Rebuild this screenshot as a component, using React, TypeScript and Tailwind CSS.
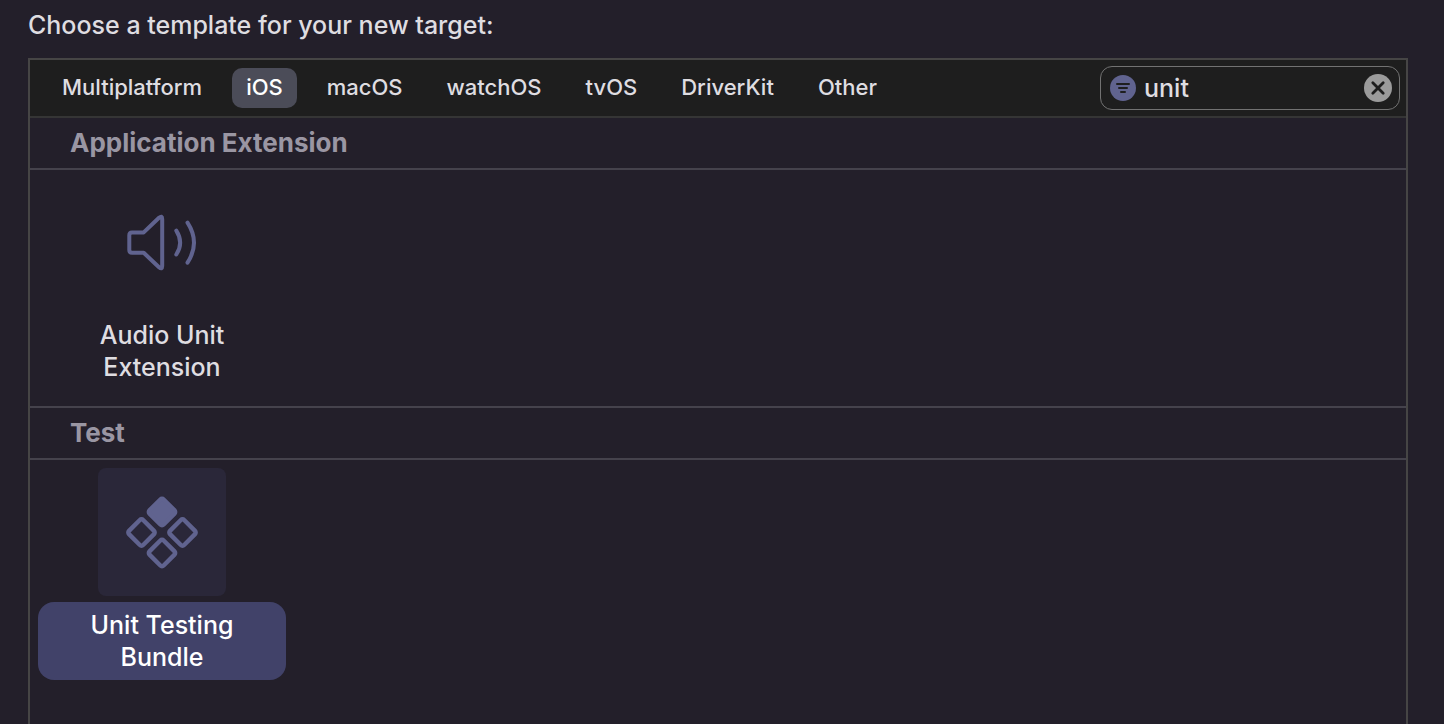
import { useState, type ReactNode } from "react";

const platforms = ["Multiplatform", "iOS", "macOS", "watchOS", "tvOS", "DriverKit", "Other"];

function SpeakerIcon() {
  return (
    <svg viewBox="0 0 128 128" className="size-32" fill="none" stroke="#60638f" strokeWidth="4" strokeLinecap="round" strokeLinejoin="round" aria-hidden="true">
      <path d="M34 54.400H45.700L61 39.800Q64.200 37 64.200 41V88Q64.200 92 61 89.200L45.700 74.800H34Q31.300 74.800 31.300 72V57.200Q31.300 54.400 34 54.400Z" />
      <path d="M78.300 52.700Q86 64.700 78.300 76.500" />
      <path d="M89.500 44.700Q102.500 64.700 89.500 84.700" />
    </svg>
  );
}

function DiamondsIcon() {
  return (
    <svg viewBox="0 0 128 128" className="size-32" fill="none" stroke="#60638f" strokeWidth="4.400" aria-hidden="true">
      <rect x="54" y="34" width="20" height="20" rx="2.300" transform="rotate(45 64 44)" fill="#60638f" />
      <rect x="33.500" y="54.500" width="20" height="20" rx="2.300" transform="rotate(45 43.500 64.500)" />
      <rect x="74.500" y="54.500" width="20" height="20" rx="2.300" transform="rotate(45 84.500 64.500)" />
      <rect x="54" y="75" width="20" height="20" rx="2.300" transform="rotate(45 64 85)" />
    </svg>
  );
}

function FilterIcon() {
  return (
    <svg viewBox="0 0 26 26" className="size-[26px] shrink-0" aria-hidden="true">
      <circle cx="13" cy="13" r="13" fill="#60638f" />
      <path d="M7 9h12M9 13h8M11 17h4" stroke="#1e1e1e" strokeWidth="2" strokeLinecap="round" />
    </svg>
  );
}

function ClearIcon() {
  return (
    <svg viewBox="0 0 28 28" className="size-7" aria-hidden="true">
      <circle cx="14" cy="14" r="14" fill="#9b9b9b" />
      <path d="M8.800 8.800l10.400 10.400M19.200 8.800L8.800 19.200" stroke="#1e1e1e" strokeWidth="2.800" strokeLinecap="round" />
    </svg>
  );
}

function Section({ title, children }: { title: string; children: ReactNode }) {
  return (
    <section className="border-[#45424c] not-last:border-b-2">
      <h2 className="border-b-2 border-[#45424c] px-10 py-2 text-[26px] leading-[34px] font-bold text-[#9a96a3]">{title}</h2>
      <div className="flex flex-wrap px-2 pt-2 pb-4">{children}</div>
    </section>
  );
}

type TemplateProps = { label: string; icon: ReactNode; selected: boolean; onSelect: () => void };

function Template({ label, icon, selected, onSelect }: TemplateProps) {
  return (
    <button type="button" aria-pressed={selected} onClick={onSelect} className="flex w-62 flex-col items-center gap-1.5">
      <span className={selected ? "rounded-lg bg-[#2a2739]" : "rounded-lg"}>{icon}</span>
      <span className={selected ? "w-full rounded-2xl bg-[#414269] px-10 py-[7px] text-white" : "w-full rounded-2xl px-10 py-[7px]"}>{label}</span>
    </button>
  );
}

export default function App() {
  const [platform, setPlatform] = useState("iOS");
  const [query, setQuery] = useState("unit");
  const [selected, setSelected] = useState("Unit Testing Bundle");

  return (
    <main className="flex min-h-screen flex-col bg-[#231f2a] px-7 pt-[9px] font-['Inter',sans-serif] text-[25px] leading-8 font-medium text-[#dfdde1]">
      <h1 className="mb-[17px]">Choose a template for your new target:</h1>
      <div className="mr-2 flex-1 border-2 border-b-0 border-[#464545]">
        <div className="flex items-center justify-between border-b-2 border-[#353535] bg-[#1e1e1e] py-1.5 pr-1.5 pl-[18px]">
          <nav aria-label="Platform" className="flex gap-4 text-[22px] leading-7">
            {platforms.map((name) => (
              <button
                key={name}
                type="button"
                aria-pressed={name === platform}
                onClick={() => setPlatform(name)}
                className={name === platform ? "rounded-[10px] bg-[#4b4c58] px-3.5 pt-[5px] pb-[7px] text-white" : "rounded-[10px] px-3.5 pt-[5px] pb-[7px]"}
              >
                {name}
              </button>
            ))}
          </nav>
          <div className="flex h-11 w-75 items-center gap-2 rounded-xl border border-[#727272] pr-[7px] pl-[9px]">
            <FilterIcon />
            <input
              type="text"
              aria-label="Filter"
              value={query}
              onChange={(event) => setQuery(event.target.value)}
              className="min-w-0 flex-1 bg-transparent outline-none"
            />
            <button type="button" aria-label="Clear filter" onClick={() => setQuery("")}>
              <ClearIcon />
            </button>
          </div>
        </div>
        <Section title="Application Extension">
          <Template
            label="Audio Unit Extension"
            icon={<SpeakerIcon />}
            selected={selected === "Audio Unit Extension"}
            onSelect={() => setSelected("Audio Unit Extension")}
          />
        </Section>
        <Section title="Test">
          <Template
            label="Unit Testing Bundle"
            icon={<DiamondsIcon />}
            selected={selected === "Unit Testing Bundle"}
            onSelect={() => setSelected("Unit Testing Bundle")}
          />
        </Section>
      </div>
    </main>
  );
}
